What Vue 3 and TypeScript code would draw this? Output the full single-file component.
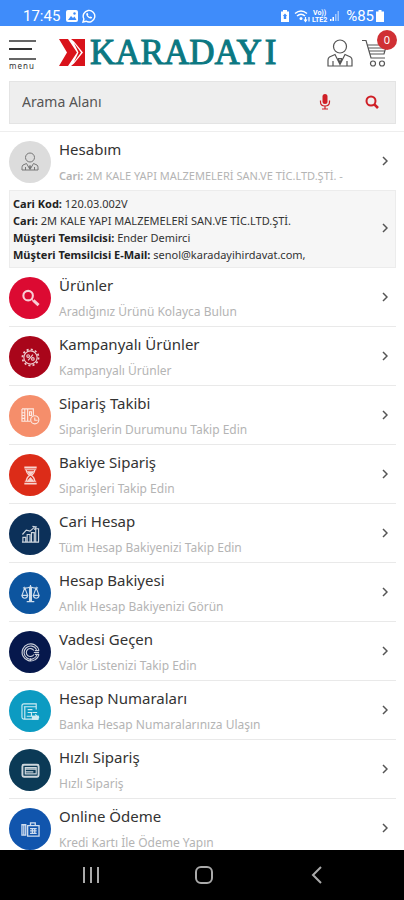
<script setup lang="ts">
import { ref } from 'vue'

interface MenuItem {
  id: string
  title: string
  note: string
}

const query = ref<string>('')
const cartCount = ref<number>(0)

const items: MenuItem[] = [
  { id: 'products', title: 'Ürünler', note: 'Aradığınız Ürünü Kolayca Bulun' },
  { id: 'campaign', title: 'Kampanyalı Ürünler', note: 'Kampanyalı Ürünler' },
  { id: 'tracking', title: 'Sipariş Takibi', note: 'Siparişlerin Durumunu Takip Edin' },
  { id: 'pending', title: 'Bakiye Sipariş', note: 'Siparişleri Takip Edin' },
  { id: 'account', title: 'Cari Hesap', note: 'Tüm Hesap Bakiyenizi Takip Edin' },
  { id: 'balance', title: 'Hesap Bakiyesi', note: 'Anlık Hesap Bakiyenizi Görün' },
  { id: 'overdue', title: 'Vadesi Geçen', note: 'Valör Listenizi Takip Edin' },
  { id: 'numbers', title: 'Hesap Numaraları', note: 'Banka Hesap Numaralarınıza Ulaşın' },
  { id: 'quick', title: 'Hızlı Sipariş', note: 'Hızlı Sipariş' },
  { id: 'payment', title: 'Online Ödeme', note: 'Kredi Kartı İle Ödeme Yapın' },
]
</script>

<template>
  <div class="screen">
    <div class="status">
      <span class="clock">17:45</span>
      <svg class="status-icon" viewBox="0 0 14 14" width="14" height="14" aria-hidden="true">
        <rect x="1" y="1" width="12" height="12" rx="2" fill="#fff" />
        <path d="M3 11l3-4 2 2 1.500-1.500L11.500 11z" fill="#3f8cfa" />
        <circle cx="9.500" cy="4.500" r="1.200" fill="#3f8cfa" />
      </svg>
      <svg class="status-icon" viewBox="0 0 14 14" width="14" height="14" aria-hidden="true">
        <path d="M1 13l.9-3A5.800 5.800 0 1 1 4 12.200z" fill="none" stroke="#fff" stroke-width="1.400" />
        <path d="M4.500 4.200l1-.4.9 1.700-.6.8c.5.9 1.100 1.400 2 1.800l.8-.7 1.600.9c-.2 1.200-1.200 1.500-2.200 1.200C6 8.800 4.300 7 4.200 5.200z" fill="#fff" />
      </svg>
      <span class="spacer"></span>
      <svg viewBox="0 0 10 14" width="10" height="14" aria-hidden="true">
        <path d="M3 1h4v1.500h2V13H1V2.500h2z" fill="#fff" />
        <path d="M5 4.500L2.800 7h1v3h2.400V7h1z" fill="#3f8cfa" />
      </svg>
      <svg class="signal" viewBox="0 0 48 16" width="48" height="16" aria-hidden="true">
        <g fill="none" stroke="#fff" stroke-width="1.500">
          <path d="M1 5.500q6-5 12 0M3 8q4-3.500 8 0" />
          <path d="M11.500 9v4M10 11.500l1.500 2 1.500-2M15 13.500V9" stroke-width="1.200" />
        </g>
        <circle cx="7" cy="10.500" r="1.500" fill="#fff" />
        <text x="19" y="7" class="tiny">Vo))</text>
        <text x="18" y="14" class="tiny">LTE2</text>
        <path d="M36 11h1.500v2H36zM38.500 9H40v4h-1.500z" fill="#fff" />
        <path d="M41 6h1.500v7H41zM43.500 3H45v10h-1.500z" fill="#fff" opacity=".5" />
      </svg>
      <span class="battery-text">%85</span>
      <svg viewBox="0 0 8 12" width="8" height="12" aria-hidden="true">
        <path d="M2.500 0h3v1.500H8V12H0V1.500h2.500z" fill="#fff" />
      </svg>
    </div>

    <header class="top">
      <button class="menu" type="button">
        <span class="bar"></span>
        <span class="bar short"></span>
        <span class="bar"></span>
        <span class="menu-text">menu</span>
      </button>
      <a class="brand" href="#home">
        <svg viewBox="0 0 26 27" width="26" height="27" aria-hidden="true">
          <path d="M0 0h9l9 13.500L9 27H0l8-13.500z" fill="#d9131b" />
          <path d="M12 0h14v27H12l3-2.500 9-11L15 2.500z" fill="#d9131b" />
          <path d="M15 4l7 9.500-7 9.500 4.500-9.500z" fill="#d9131b" />
        </svg>
        <span class="brand-name">KARADAY<span class="brand-end">I</span></span>
      </a>
      <a class="user" href="#user" aria-label="Hesabım">
        <svg viewBox="0 0 26 28" width="26" height="28" fill="none" stroke="#555" stroke-width="1.200" aria-hidden="true">
          <circle cx="13" cy="7.500" r="6.500" />
          <path d="M8 15.500L2.500 18Q1 19 1 21v6h24v-6q0-2-1.500-3L18 15.500l-5 10zM11.500 19.500h3l-1.500 5zM6 22v5M20 22v5" />
        </svg>
      </a>
      <a class="cart" href="#cart" aria-label="Sepet">
        <svg viewBox="0 0 26 28" width="26" height="28" fill="none" stroke="#555" stroke-width="1.200" aria-hidden="true">
          <path d="M0 1.500h4l5 17.500h14M5 6h19.500L22 15H8M6 9h17M7 12h16" />
          <circle cx="11" cy="24.500" r="2.500" />
          <circle cx="20" cy="24.500" r="2.500" />
        </svg>
        <span class="badge">{{ cartCount }}</span>
      </a>
    </header>

    <form class="search" @submit.prevent>
      <input v-model="query" class="field" type="text" placeholder="Arama Alanı" aria-label="Arama Alanı" />
      <button class="tool" type="button" aria-label="Sesli arama">
        <svg viewBox="0 0 12 16" width="12" height="16" aria-hidden="true">
          <rect x="3.500" y="0" width="5" height="10" rx="2.500" fill="#cf1f26" />
          <path d="M1.500 6.500v1.500q0 4 4.500 4t4.500-4V6.500M6 12v3M3 15h6" fill="none" stroke="#cf1f26" stroke-width="1.200" />
        </svg>
      </button>
      <button class="tool" type="submit" aria-label="Ara">
        <svg viewBox="0 0 14 14" width="14" height="14" fill="none" stroke="#cf1f26" stroke-width="2" aria-hidden="true">
          <circle cx="6" cy="6" r="4.500" />
          <path d="M9.300 9.300L13 13" stroke-width="2.600" />
        </svg>
      </button>
    </form>

    <main class="list">
      <a class="row" href="#hesabim">
        <span class="disc me">
          <svg viewBox="0 0 18 20" width="18" height="20" fill="none" stroke="#777" aria-hidden="true">
            <circle cx="9" cy="5.500" r="4.500" />
            <path d="M5.500 11.500L2 13q-1 1-1 2.500V18h16v-2.500q0-1.500-1-2.500l-3.500-1.500L9 17.500zM8 14h2l-1 3zM4.500 15v3M13.500 15v3" />
          </svg>
        </span>
        <span class="words">
          <span class="title">Hesabım</span>
          <span class="note account-note"><b>Cari:</b> 2M KALE YAPI MALZEMELERİ SAN.VE TİC.LTD.ŞTİ. -</span>
        </span>
        <svg class="chevron" viewBox="0 0 6 10" width="6" height="10" aria-hidden="true"><path d="M1 1l4 4-4 4" /></svg>
      </a>

      <a class="details" href="#cari">
        <span class="facts">
          <span><b>Cari Kod:</b> 120.03.002V</span>
          <span><b>Cari:</b> 2M KALE YAPI MALZEMELERİ SAN.VE TİC.LTD.ŞTİ.</span>
          <span><b>Müşteri Temsilcisi:</b> Ender Demirci</span>
          <span><b>Müşteri Temsilcisi E-Mail:</b> senol@karadayihirdavat.com,</span>
        </span>
        <svg class="chevron" viewBox="0 0 6 10" width="6" height="10" aria-hidden="true"><path d="M1 1l4 4-4 4" /></svg>
      </a>

      <a v-for="item in items" :key="item.id" class="row" :href="'#' + item.id">
        <span class="disc" :class="item.id">
          <svg class="glyph" viewBox="0 0 20 20" width="19" height="19" aria-hidden="true">
            <g v-if="item.id === 'products'">
              <circle cx="7.500" cy="7" r="5" stroke-width="2.200" />
              <path d="M11 10.500l2 2" />
              <path d="M13 12l5.500 5" stroke-width="3.200" />
            </g>
            <g v-else-if="item.id === 'campaign'">
              <circle cx="10" cy="10" r="7" />
              <circle cx="10" cy="10" r="8.500" stroke-width="1.800" stroke-dasharray="2.200 2.250" />
              <path d="M12.500 7l-5 6" />
              <circle cx="7.500" cy="8.500" r="1.400" />
              <circle cx="12.500" cy="11.500" r="1.400" />
            </g>
            <g v-else-if="item.id === 'tracking'">
              <path d="M1 2h12v7M1 2v13h9M4 2v13M7 2v13M1 6h3M1 9h3M1 12h3M9 5h2v4H9z" />
              <circle cx="14.500" cy="13.500" r="4.300" />
              <path d="M14.500 11v3h3" />
            </g>
            <g v-else-if="item.id === 'pending'">
              <path d="M3.500 1.500h13M3.500 18.500h13" stroke-width="2" />
              <path d="M4 4h12M4 16h12M5.500 4q0 3.500 3.500 6-3.500 2.500-3.500 6M14.500 4q0 3.500-3.500 6 3.500 2.500 3.500 6" />
              <path d="M7 6h6l-3 3.500zM7 16l3-3.500 3 3.500z" class="solid" />
            </g>
            <g v-else-if="item.id === 'account'">
              <path d="M1 18h18M2 18v-5h3v5M6.500 18v-8h3v8M11 18V8h3v10M15.500 18V4h3v14M1.500 10l4-4.500 4 1L14 2.500M12 1.500l4 .5-2 3" />
            </g>
            <g v-else-if="item.id === 'balance'">
              <path d="M10 1v17M6 18.500h8M2 4q4 1 8-1 4 2 8 1M4 4l-3 8h6zM16 4l-3 8h6zM1 12q.5 3 3 3t3-3M13 12q.5 3 3 3t3-3M9 4v14M11 4v14" />
            </g>
            <g v-else-if="item.id === 'overdue'">
              <path d="M19 8A9 9 0 1 0 15 17.500M19 8h-4.500M16.500 7A7 7 0 1 0 17 12M19 12h-4.500M19 12q-1 4-4 5.500" />
              <path d="M13.500 8A4.200 4.200 0 1 0 13.500 12M13.500 10H19M10 19v-3" />
            </g>
            <g v-else-if="item.id === 'numbers'">
              <path d="M16 8V2H3q-2 0-2 2v12q0 2 2 2h15M3 5h13M4 5v13M7 8h5M7 11h4v4h8M12 11h5M6 15h5M15 13l4 4" />
              <path d="M12 15h6v3h-6z" class="solid" />
            </g>
            <g v-else-if="item.id === 'quick'">
              <rect x="1.500" y="4" width="17" height="12.500" rx="1.500" stroke-width="2" />
              <path d="M4.500 7h11.500v6.500H4.500zM4 8.500h12M5 11.500h8" />
            </g>
            <g v-else>
              <path d="M1 5h4v11H1zM3 5v11M7 6h12v11H7zM10 6V3h5v3M9.500 9h7M9.500 11.500h7M9.500 14h7M12 9v5M14.500 9v5" stroke-width="1.400" />
            </g>
          </svg>
        </span>
        <span class="words">
          <span class="title">{{ item.title }}</span>
          <span class="note">{{ item.note }}</span>
        </span>
        <svg class="chevron" viewBox="0 0 6 10" width="6" height="10" aria-hidden="true"><path d="M1 1l4 4-4 4" /></svg>
      </a>
    </main>

    <nav class="system">
      <button type="button" aria-label="Son uygulamalar">
        <svg viewBox="0 0 18 18" width="18" height="18"><path d="M2 1v16M9 1v16M16 1v16" /></svg>
      </button>
      <button type="button" aria-label="Ana ekran">
        <svg viewBox="0 0 18 18" width="18" height="18"><rect x="1" y="1" width="16" height="16" rx="5" /></svg>
      </button>
      <button type="button" aria-label="Geri">
        <svg viewBox="0 0 18 18" width="18" height="18"><path d="M13 1L5 9l8 8" /></svg>
      </button>
    </nav>
  </div>
</template>

<style>
body {
  margin: 0;
  background: #fff;
}
</style>

<style scoped>
.screen {
  display: flex;
  flex-direction: column;
  height: 100vh;
  overflow: hidden;
  font-family: "Noto Sans", "Open Sans", sans-serif;
  color: #333;
}

.screen *,
.screen {
  box-sizing: border-box;
}

button {
  border: 0;
  padding: 0;
  background: none;
  font: inherit;
  color: inherit;
}

a {
  color: inherit;
  text-decoration: none;
}

svg {
  display: block;
  flex: none;
}

.status {
  flex: none;
  display: flex;
  align-items: center;
  height: 26px;
  padding: 5px 20px 0 23px;
  background: #3f8cfa;
  color: #fff;
  font: 15px/20px Roboto, sans-serif;
}

.clock {
  margin-right: 5px;
}

.status-icon {
  margin-right: 3px;
}

.spacer {
  flex: 1;
}

.signal {
  margin: 0 4px 0 4px;
}

.tiny {
  fill: #fff;
  font: bold 7px Roboto, sans-serif;
}

.battery-text {
  margin-right: 2px;
}

.top {
  flex: none;
  display: flex;
  align-items: flex-start;
  height: 55px;
  padding: 13px 16px 0 9px;
}

.menu {
  display: flex;
  flex-direction: column;
  align-items: flex-start;
  gap: 6px;
  width: 27px;
  padding-top: 1px;
}

.bar {
  width: 27px;
  height: 2px;
  background: #666;
}

.bar.short {
  width: 23px;
  background: #333;
}

.bar:nth-child(3) {
  margin-top: 2px;
}

.menu-text {
  height: 8px;
  margin-top: -4px;
  font-size: 8px;
  line-height: 8px;
  letter-spacing: 1px;
}

.brand {
  display: flex;
  align-items: flex-start;
  gap: 5px;
  margin-left: 23px;
}

.brand-name {
  font: 35px/28px "Liberation Serif", serif;
  color: #0b7882;
  -webkit-text-stroke: 1px #0b7882;
}

.brand-end {
  margin-left: 3px;
}

.user {
  margin-left: auto;
}

.cart {
  position: relative;
  margin-left: 9px;
}

.badge {
  position: absolute;
  top: -9px;
  right: -9px;
  width: 20px;
  height: 20px;
  border-radius: 50%;
  background: #d03034;
  color: #fff;
  font-size: 11px;
  line-height: 20px;
  text-align: center;
}

.cart,
.user {
  width: 26px;
}

.search {
  flex: none;
  display: flex;
  align-items: center;
  height: 43px;
  margin: 0 8px 7px 9px;
  padding: 0 16px 2px 12px;
  border: 1px solid #e4e4e4;
  background: #eee;
}

.field {
  flex: 1;
  min-width: 0;
  border: 0;
  padding: 0;
  outline: 0;
  background: none;
  font: inherit;
  font-size: 14px;
  color: #555;
}

.field::placeholder {
  color: #555;
  opacity: 1;
}

.tool + .tool {
  margin-left: 34px;
}

.list {
  flex: 1;
  min-height: 0;
  overflow: hidden;
  border-top: 1px solid #eee;
}

.row {
  display: flex;
  align-items: flex-start;
  height: 59px;
  margin: 0 8px 0 9px;
  padding: 9px 8px 0 0;
  border-bottom: 1px solid #e9e9e9;
}

.row:first-child {
  height: 58px;
  border-bottom: 0;
}

.disc {
  flex: none;
  display: flex;
  align-items: center;
  justify-content: center;
  width: 42px;
  height: 42px;
  margin-right: 8px;
  border-radius: 50%;
}

.me { background: #dcdcdc; }
.products { background: #dc0a32; }
.campaign { background: #a9051a; }
.tracking { background: #f58e6b; }
.pending { background: #dc2c18; }
.account { background: #0c3059; }
.balance { background: #0d559f; }
.overdue { background: #06184c; }
.numbers { background: #0c9bc2; }
.quick { background: #0b3a56; }
.payment { background: #1155ad; }

.glyph {
  fill: none;
  stroke: #fff;
  stroke-width: 1.200;
  opacity: 0.8;
}

.solid {
  fill: #fff;
}

.words {
  flex: 1;
  min-width: 0;
  display: flex;
  flex-direction: column;
  gap: 6px;
  margin-top: -3px;
  white-space: nowrap;
}

.title {
  font-size: 15px;
  line-height: 22px;
}

.note {
  font-size: 12px;
  line-height: 20px;
  color: #b4b4b4;
}

.account-note {
  font-size: 11px;
}

.account-note b {
  font-weight: 600;
}

.chevron {
  align-self: center;
  margin-bottom: 9px;
  fill: none;
  stroke: #555;
  stroke-width: 1.500;
}

.details {
  display: flex;
  height: 78px;
  margin: 0 8px 0 9px;
  padding: 4px 7px 4px 3px;
  border: 1px solid #ececec;
  background: #f6f6f6;
}

.details .chevron {
  margin-bottom: 2px;
}

.facts {
  flex: 1;
  min-width: 0;
  display: flex;
  flex-direction: column;
  font-size: 11px;
  line-height: 17px;
  white-space: nowrap;
}

.facts b {
  color: #222;
}

.system {
  flex: none;
  display: flex;
  justify-content: center;
  gap: 95px;
  height: 50px;
  padding: 0 0 0 4px;
  background: #000;
}

.system svg {
  fill: none;
  stroke: #aaa;
  stroke-width: 2;
}
</style>
